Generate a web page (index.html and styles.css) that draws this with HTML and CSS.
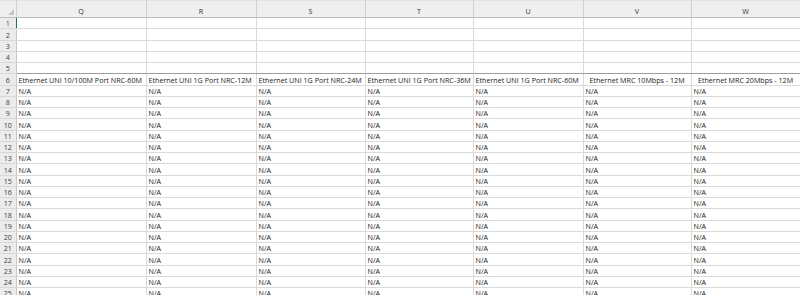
FILE: index.html
```html
<!DOCTYPE html>
<html>
<head>
<meta charset="utf-8">
<link rel="stylesheet" href="styles.css">
</head>
<body>
<table class="sheet">
<colgroup>
<col class="c-hd"><col class="c-q"><col class="c-r"><col class="c-s"><col class="c-t"><col class="c-u"><col class="c-v"><col class="c-w">
</colgroup>
<thead>
<tr class="colhead"><th class="corner"><span class="tri"></span></th><th>Q</th><th>R</th><th>S</th><th>T</th><th>U</th><th>V</th><th>W</th></tr>
</thead>
<tbody>
<tr><th class="active">1</th><td class="activecell"></td><td></td><td></td><td></td><td></td><td></td><td></td></tr>
<tr><th>2</th><td></td><td></td><td></td><td></td><td></td><td></td><td></td></tr>
<tr><th>3</th><td></td><td></td><td></td><td></td><td></td><td></td><td></td></tr>
<tr><th>4</th><td></td><td></td><td></td><td></td><td></td><td></td><td></td></tr>
<tr class="freeze"><th>5</th><td></td><td></td><td></td><td></td><td></td><td></td><td></td></tr>
<tr><th>6</th><td>Ethernet UNI 10/100M Port NRC-60M</td><td>Ethernet UNI 1G Port NRC-12M</td><td>Ethernet UNI 1G Port NRC-24M</td><td>Ethernet UNI 1G Port NRC-36M</td><td>Ethernet UNI 1G Port NRC-60M</td><td class="center">Ethernet MRC 10Mbps - 12M</td><td class="center">Ethernet MRC 20Mbps - 12M</td></tr>
<tr><th>7</th><td>N/A</td><td>N/A</td><td>N/A</td><td>N/A</td><td>N/A</td><td>N/A</td><td>N/A</td></tr>
<tr><th>8</th><td>N/A</td><td>N/A</td><td>N/A</td><td>N/A</td><td>N/A</td><td>N/A</td><td>N/A</td></tr>
<tr><th>9</th><td>N/A</td><td>N/A</td><td>N/A</td><td>N/A</td><td>N/A</td><td>N/A</td><td>N/A</td></tr>
<tr><th>10</th><td>N/A</td><td>N/A</td><td>N/A</td><td>N/A</td><td>N/A</td><td>N/A</td><td>N/A</td></tr>
<tr><th>11</th><td>N/A</td><td>N/A</td><td>N/A</td><td>N/A</td><td>N/A</td><td>N/A</td><td>N/A</td></tr>
<tr><th>12</th><td>N/A</td><td>N/A</td><td>N/A</td><td>N/A</td><td>N/A</td><td>N/A</td><td>N/A</td></tr>
<tr><th>13</th><td>N/A</td><td>N/A</td><td>N/A</td><td>N/A</td><td>N/A</td><td>N/A</td><td>N/A</td></tr>
<tr><th>14</th><td>N/A</td><td>N/A</td><td>N/A</td><td>N/A</td><td>N/A</td><td>N/A</td><td>N/A</td></tr>
<tr><th>15</th><td>N/A</td><td>N/A</td><td>N/A</td><td>N/A</td><td>N/A</td><td>N/A</td><td>N/A</td></tr>
<tr><th>16</th><td>N/A</td><td>N/A</td><td>N/A</td><td>N/A</td><td>N/A</td><td>N/A</td><td>N/A</td></tr>
<tr><th>17</th><td>N/A</td><td>N/A</td><td>N/A</td><td>N/A</td><td>N/A</td><td>N/A</td><td>N/A</td></tr>
<tr><th>18</th><td>N/A</td><td>N/A</td><td>N/A</td><td>N/A</td><td>N/A</td><td>N/A</td><td>N/A</td></tr>
<tr><th>19</th><td>N/A</td><td>N/A</td><td>N/A</td><td>N/A</td><td>N/A</td><td>N/A</td><td>N/A</td></tr>
<tr><th>20</th><td>N/A</td><td>N/A</td><td>N/A</td><td>N/A</td><td>N/A</td><td>N/A</td><td>N/A</td></tr>
<tr><th>21</th><td>N/A</td><td>N/A</td><td>N/A</td><td>N/A</td><td>N/A</td><td>N/A</td><td>N/A</td></tr>
<tr><th>22</th><td>N/A</td><td>N/A</td><td>N/A</td><td>N/A</td><td>N/A</td><td>N/A</td><td>N/A</td></tr>
<tr><th>23</th><td>N/A</td><td>N/A</td><td>N/A</td><td>N/A</td><td>N/A</td><td>N/A</td><td>N/A</td></tr>
<tr><th>24</th><td>N/A</td><td>N/A</td><td>N/A</td><td>N/A</td><td>N/A</td><td>N/A</td><td>N/A</td></tr>
<tr><th>25</th><td>N/A</td><td>N/A</td><td>N/A</td><td>N/A</td><td>N/A</td><td>N/A</td><td>N/A</td></tr>
</tbody>
</table>
</body>
</html>
```
FILE: styles.css
```css
html, body {
  margin: 0;
  padding: 0;
  background: #ffffff;
  overflow: hidden;
}
.sheet {
  border-collapse: collapse;
  table-layout: fixed;
  width: 800px;
  font-family: "Open Sans", "Noto Sans", sans-serif;
  font-size: 7.15px;
  color: #1a1a1a;
}
.c-hd { width: 16px; }
.c-q { width: 130px; }
.c-r { width: 110px; }
.c-s { width: 109px; }
.c-t { width: 108px; }
.c-u { width: 110px; }
.c-v { width: 108px; }
.c-w { width: 109px; }

.sheet th, .sheet td {
  padding: 0 0 0 2px;
  border-right: 1px solid #dadada;
  border-bottom: 1px solid #dadada;
  white-space: nowrap;
  overflow: hidden;
  line-height: 10px;
  vertical-align: bottom;
  text-align: left;
  font-weight: normal;
}
.sheet tbody tr {
  height: 11.25px;
}
.colhead {
  height: 17px;
}
.colhead th {
  background: #efefef;
  text-align: center;
  vertical-align: bottom;
  padding: 0 0 1px 0;
  color: #333333;
  border-right: 1px solid #d0d0d0;
  border-bottom: 1px solid #bdbdbd;
  border-top: 1px solid #e2e2e2;
}
.corner {
  position: relative;
}
.tri {
  position: absolute;
  right: 2px;
  bottom: 2px;
  width: 0;
  height: 0;
  border-left: 6px solid transparent;
  border-bottom: 6px solid #c4c4c4;
}
.sheet tbody th {
  background: #ececec;
  text-align: center;
  padding: 0;
  color: #404040;
  border-right: 1px solid #c8c8c8;
  border-bottom: 1px solid #d8d8d8;
}
.sheet tbody th.active {
  color: #217346;
  border-right: 1px solid #217346;
}
.freeze th, .freeze td {
  border-bottom: 1px solid #9e9e9e;
}
.sheet td.center {
  text-align: center;
  padding: 0;
}
```
